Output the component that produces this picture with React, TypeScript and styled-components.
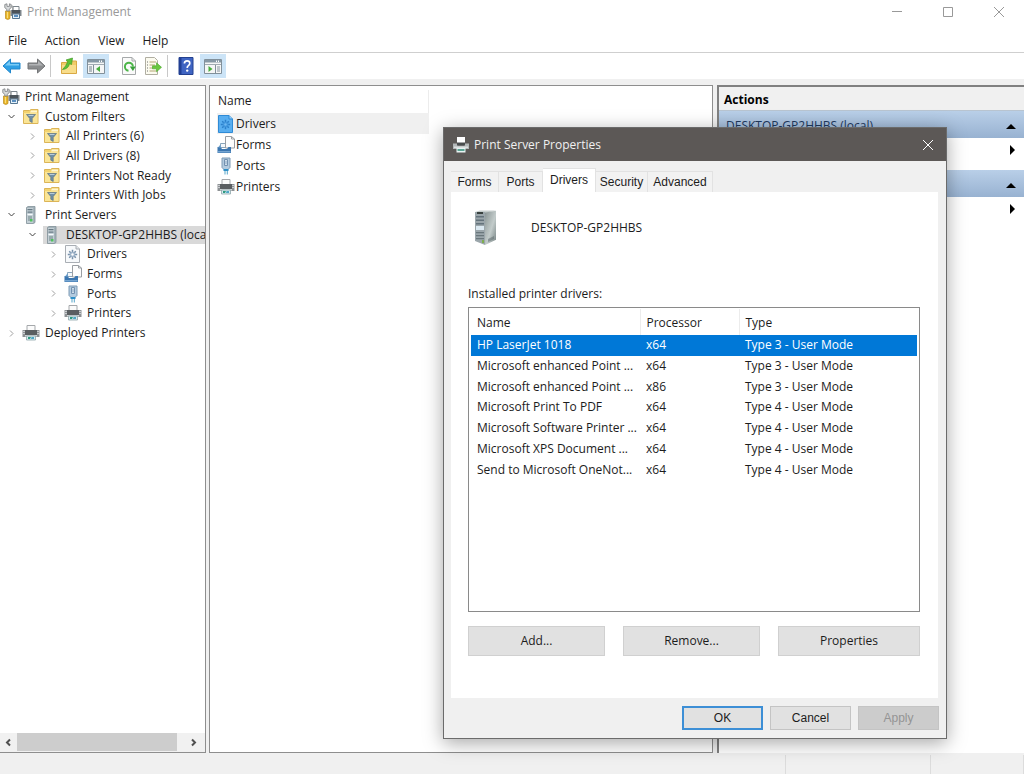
import React from "react";
import styled, { createGlobalStyle, css } from "styled-components";

const Global = createGlobalStyle`
  * { box-sizing: border-box; }
  body { margin: 0; background: #f0f0f0; }
  body, button, table { font: 12px/18px "Open Sans", "Noto Sans", sans-serif; color: #1c1c1c; }
  button { margin: 0; padding: 0; border: 0; background: none; }
  svg { display: block; flex: none; }
`;

/* ---------- icons ---------- */

const PrinterIcon = ({ size = 18 }: { size?: number }) => (
  <svg width={size} height={size} viewBox="0 0 18 18" aria-hidden="true">
    <path d="M5 1.500h8v5H5z" fill="#fbfbfb" stroke="#a5a8ab" />
    <path d="M.5 6h17v7H.5z" fill="#8d9194" />
    <path d="M3 6h12v5H3z" fill="#5a5e61" />
    <path d="M1 7h2v1H1zM1 9h2v1H1zM15 7h2v1h-2zM15 9h2v1h-2z" fill="#c9cccf" />
    <path d="M3 11h12v1.500H3z" fill="#d3d6d8" />
    <path d="M4.500 12h9v4h-9z" fill="#d8eef2" stroke="#8fa4aa" strokeWidth=".8" />
    <path d="M6 13h3l-1 2H6z" fill="#2f9a80" />
    <path d="M9.500 13H12v2H9z" fill="#4fa6c6" />
  </svg>
);

const TitlePrinterIcon = () => (
  <svg width="18" height="18" viewBox="0 0 18 18" aria-hidden="true">
    <path d="M5 1h8v6H5z" fill="#fff" />
    <path d="M1 7.500h4l1 2h6l1-2h4v5.500H1z" fill="#b3b7b8" />
    <path d="M5 6.500h8v3H5z" fill="#4a4d4e" />
    <path d="M2 10.500h14v1.500H2z" fill="#dde0e1" />
    <path d="M4.500 12h9v4.500h-9z" fill="#e8f3f3" />
    <path d="M5.500 13h7v2h-7z" fill="#5aa493" />
  </svg>
);

const ManagementIcon = () => (
  <svg width="18" height="18" viewBox="0 0 18 18" aria-hidden="true">
    <path d="M9 3.500h6v4H9z" fill="#fff" stroke="#7d868d" />
    <path d="M6.500 7h11v6h-11z" fill="#7e868c" />
    <path d="M8 7h8v3.500H8z" fill="#4b5359" />
    <path d="M8.500 11h7v4.500h-7z" fill="#e4f1fa" stroke="#567792" />
    <path d="M10 12h4v2h-4z" fill="#5a8fc0" />
    <path d="M1.500 8h4.500v7.500q-2.200 2-4.500 0z" fill="#eab72b" stroke="#b98a1c" strokeWidth=".7" />
    <path d="M3 9h1v6H3z" fill="#f9dd7c" />
    <path d="M.8 1.500v3.200l2 1.600V8h2.400V6.200l2-1.500V1.500L5.400.8v2.600H3V.8z" fill="#d7dadb" stroke="#7b7e80" strokeWidth=".8" />
    <path d="M7 2q2 0 2.500 2v3H8V4.500L6.500 4z" fill="#a5a8aa" />
  </svg>
);

const FilterFolderIcon = () => (
  <svg width="18" height="18" viewBox="0 0 18 18" aria-hidden="true">
    <path d="M1.500 4.500V2.500h6l1.500-1h7v14h-14.500z" fill="#f3d36f" stroke="#dcb557" />
    <path d="M9 2.500h6v2H8z" fill="#fff6cf" />
    <path d="M2 5h13.500v10H2z" fill="#fae596" />
    <path d="M4.500 6.500h9l-3.300 4v4l-2.400-1.300v-2.700z" fill="#6f8fa6" stroke="#5f7483" strokeWidth=".7" />
    <path d="M6 7h6l-1 1H7z" fill="#b8cbd8" />
  </svg>
);

const ServerIcon = () => (
  <svg width="18" height="18" viewBox="0 0 18 18" aria-hidden="true">
    <path d="M4.500 1.500 6 .5h7v16l-1.500 1h-7z" fill="#a4b3ba" stroke="#83939b" strokeWidth=".8" />
    <path d="M5 2h6v15H5z" fill="#c3cfd5" />
    <path d="M5.500 3h5v1.200h-5zM5.500 5.500h5v1.200h-5z" fill="#687b85" />
    <path d="M5.500 8h5v1h-5z" fill="#f5fafc" />
    <path d="M6 10h4v5H6z" fill="#99aaae" />
    <path d="M8 13h2.500v2.500H8z" fill="#4fc25c" />
  </svg>
);

const TowerIcon = () => (
  <svg width="24" height="36" viewBox="0 0 24 36" aria-hidden="true">
    <defs>
      <linearGradient id="towerSide" x1="0" y1="0" x2="1" y2="1">
        <stop offset="0" stopColor="#8a9595" />
        <stop offset=".55" stopColor="#c3cccb" />
        <stop offset="1" stopColor="#738080" />
      </linearGradient>
    </defs>
    <path d="M1 2 6 .5h16L11 3z" fill="#c6cecd" />
    <path d="M1 2h10v33L1 31z" fill="#9ba6ab" />
    <path d="M11 2.500 22 .8v29L11 35z" fill="url(#towerSide)" />
    <path d="M3 2h6v2H3z" fill="#39413f" />
    <path d="M2 6h8v1.500H2zM2 9.500h8V11H2zM2 13h8v1.500H2z" fill="#64737c" />
    <path d="M2 16h8v4H2z" fill="#dbe9f2" />
    <path d="M2 22h8v1.200H2zM2 25h8v1.200H2zM2 28h8v1.200H2z" fill="#6a777c" />
    <path d="m14 32 6-3v-3l-6 3z" fill="#59666a" opacity=".5" />
    <path d="M8 30h2v3H8z" fill="#7fae4e" />
  </svg>
);

const DriverIcon = ({ active = false }: { active?: boolean }) => (
  <svg width="18" height="18" viewBox="0 0 18 18" aria-hidden="true">
    <path
      d="M1.500.5h10.500l3.500 3.500v13.500h-14z"
      fill={active ? "#58aef0" : "#f7f9fb"}
      stroke={active ? "#2f8bd6" : "#a9aeb4"}
    />
    <path d="M12 .5v3.500h3.500" fill={active ? "#9bd0f8" : "#e3e6e9"} stroke={active ? "#2f8bd6" : "#a9aeb4"} />
    <g stroke={active ? "#2b7fca" : "#7690aa"} strokeWidth="1.500">
      <path d="M8.500 4.800v9.400M3.800 9.500h9.400M5.200 6.200l6.600 6.600M11.800 6.200l-6.600 6.600" />
    </g>
    <circle cx="8.500" cy="9.500" r="2.800" fill={active ? "#3f95dd" : "#9fb4ca"} />
    <circle cx="8.500" cy="9.500" r="1.200" fill={active ? "#6db8f2" : "#fff"} />
  </svg>
);

const FormIcon = () => (
  <svg width="18" height="18" viewBox="0 0 18 18" aria-hidden="true">
    <path d="M3.500 7.500h7v4h-7z" fill="#f4f8fb" stroke="#8aa5bb" />
    <path d="M8.500.5h6L17.500 3v9h-9z" fill="#fdfdfd" stroke="#9a9ea3" />
    <path d="M14.500.5V3h3" fill="none" stroke="#9a9ea3" />
    <path d="M.5 11h3l1.500 2h5l1.500-2h2.500v6H.5z" fill="#3b76b0" />
    <path d="M1 15h12.500v1.500H1z" fill="#76a5d1" />
    <path d="M1 11.500 3 9h1v2.500z" fill="#6f9fca" />
  </svg>
);

const PortIcon = () => (
  <svg width="18" height="18" viewBox="0 0 18 18" aria-hidden="true">
    <path d="M5 1h8v9.500l-2 2H7l-2-2z" fill="#b3cbdf" stroke="#7f9bb5" />
    <path d="M7.500 2.500v6h3v-6z" fill="#eef6fb" stroke="#7391b0" />
    <path d="M8.500 3.500h1v4h-1z" fill="#7295b8" />
    <path d="M6.500 12h5v2h-5z" fill="#2f8fc7" />
    <path d="M7.500 14h1v3.500h-1zM9.800 14h1v3.500h-1z" fill="#57a6ca" />
  </svg>
);

const ArrowIcon = ({ back = false }: { back?: boolean }) => (
  <svg width="20" height="18" viewBox="0 0 20 18" aria-hidden="true">
    {back ? (
      <>
        <path d="M1 9 8.500 2v4H18v6H8.500v4z" fill="#2d9fe4" stroke="#2187cc" strokeLinejoin="round" />
        <path d="M3 8.500 8 4v3h9v1.500z" fill="#79cbf6" />
      </>
    ) : (
      <>
        <path d="M19 9l-7.500-7v4H2v6h9.500v4z" fill="#8b8d8f" stroke="#747678" strokeLinejoin="round" />
        <path d="M17 8.500 12 4v3H3v1.500z" fill="#b2b4b6" />
      </>
    )}
  </svg>
);

const UpFolderIcon = () => (
  <svg width="18" height="18" viewBox="0 0 18 18" aria-hidden="true">
    <path d="M1.500 5.500h5l1-1.500h9v12.500h-15z" fill="#f2cc69" stroke="#d9a944" />
    <path d="M2 8h14v8H2z" fill="#f8dd8b" />
    <path d="M2.500 12.500Q8.500 12 9.500 6.500l2 1L12.500 1 6 3l1.800 1.500Q6 9.500 2.500 12.500z" fill="#5cc237" stroke="#3f9b27" strokeWidth=".7" />
  </svg>
);

const PaneIcon = ({ right = false }: { right?: boolean }) => (
  <svg width="18" height="18" viewBox="0 0 18 18" aria-hidden="true">
    <path d="M.5 2.500h17v14H.5z" fill="#f5f6f6" stroke="#82909a" />
    <path d="M1 3h16v2.500H1z" fill="#8698a5" />
    <path d="M12 3.500h1V5h-1zM14 3.500h1V5h-1z" fill="#fff" />
    <path d="M1 7.500h16" stroke="#a1abb2" />
    {right ? (
      <>
        <path d="M11.500 8v8" stroke="#82909a" />
        <path d="M13 10h3M13 12h3M13 14h3" stroke="#8795a0" />
        <path d="m4.500 9 4 3-4 3z" fill="#48ae3c" />
      </>
    ) : (
      <>
        <path d="M6.500 8v8" stroke="#82909a" />
        <path d="M2 10h3M2 12h3M2 14h3" stroke="#73838e" />
        <path d="m13 9-4 3 4 3z" fill="#48ae3c" />
      </>
    )}
  </svg>
);

const RefreshIcon = () => (
  <svg width="18" height="18" viewBox="0 0 18 18" aria-hidden="true">
    <path d="M2.500.5h9.500l3.500 3.500v13.500h-13z" fill="#fafafa" stroke="#a6a9aa" />
    <path d="M12 .5v3.500h3.500" fill="none" stroke="#a6a9aa" />
    <path d="M8.500 13.700A4 4 0 1 1 12.900 9.500" fill="none" stroke="#4cb548" strokeWidth="2" />
    <path d="M9.800 9.500h6L12.900 14z" fill="#38a13a" />
  </svg>
);

const ExportIcon = () => (
  <svg width="18" height="18" viewBox="0 0 18 18" aria-hidden="true">
    <path d="M1.500.5h9l3 3v14h-12z" fill="#fcfbf0" stroke="#b0aea2" />
    <path d="M3 5h1M3 8h1M3 11h1M3 14h1" stroke="#6f6f6f" />
    <path d="M5.500 5H12M5.500 8H11M5.500 11H9M5.500 14H12" stroke="#b3a574" />
    <path d="M8.500 8.800h4V5.800l5 4.500-5 4.500v-3h-4z" fill="#69c83f" stroke="#47a52a" strokeWidth=".6" />
  </svg>
);

const HelpIcon = () => (
  <svg width="16" height="18" viewBox="0 0 16 18" aria-hidden="true">
    <path d="M1 .5h14v17H1z" fill="#3f64c2" stroke="#23408f" />
    <path d="M1 .5h2.500v17H1z" fill="#213f94" />
    <path d="M6.400 6.600q0-2.700 2.700-2.700t2.700 2.400q0 1.500-1.400 2.300-1.200.8-1.200 2.300" fill="none" stroke="#fff" strokeWidth="1.700" />
    <circle cx="9.200" cy="13.600" r="1.200" fill="#fff" />
  </svg>
);

const chevronPaths = { right: "M3 1.500 6 4.500 3 7.500", down: "M1.500 3l3 3 3-3", left: "M6 1.500 3 4.500 6 7.500" };
const Chevron = ({ dir, color, width = 1 }: { dir: keyof typeof chevronPaths; color: string; width?: number }) => (
  <svg width="9" height="9" viewBox="0 0 9 9" aria-hidden="true">
    <path d={chevronPaths[dir]} fill="none" stroke={color} strokeWidth={width} />
  </svg>
);

const CloseIcon = () => (
  <svg width="12" height="12" viewBox="0 0 12 12" aria-hidden="true">
    <path d="m1 1 10 10M11 1 1 11" stroke="currentColor" />
  </svg>
);

const Triangle = ({ dir }: { dir: "up" | "right" }) => (
  <svg width="12" height="12" viewBox="0 0 12 12" aria-hidden="true">
    <path d={dir === "up" ? "M1 9 6 4l5 5z" : "m4 1 5 5-5 5z"} fill="#000" />
  </svg>
);

/* ---------- main window ---------- */

const Window = styled.div`
  position: relative;
  display: flex;
  flex-direction: column;
  min-height: 100vh;
  overflow: hidden;
`;

const TitleBar = styled.header`
  display: flex;
  align-items: center;
  gap: 5px;
  height: 23px;
  padding-left: 4px;
  background: #fff;
  color: #999;
`;

const WindowTitle = styled.h1`
  flex: 1;
  margin: 0;
  font-size: 12px;
  font-weight: 400;
`;

const WindowControls = styled.div`
  display: flex;
`;

const WindowButton = styled.button`
  display: flex;
  align-items: center;
  justify-content: center;
  width: 51px;
  height: 23px;
  color: #999;
`;

const MenuBar = styled.nav`
  display: flex;
  align-items: center;
  gap: 18px;
  height: 30px;
  padding: 6px 8px 0;
  background: #fff;
  border-bottom: 1px solid #cfcfcf;
`;

const Toolbar = styled.div`
  display: flex;
  align-items: center;
  height: 26px;
  background: #fff;
`;

const ToolGroup = styled.div<{ $gap?: number; $before?: number }>`
  display: flex;
  gap: ${(p) => p.$gap ?? 0}px;
  margin-left: ${(p) => p.$before ?? 0}px;
`;

const ToolSeparator = styled.span`
  width: 1px;
  height: 22px;
  margin: 0 6px 0 2px;
  background: #c8c8c8;
`;

const ToolButton = styled.button<{ $on?: boolean }>`
  display: flex;
  align-items: center;
  justify-content: center;
  width: ${(p) => (p.$on ? 26 : 24)}px;
  height: 24px;
  background: ${(p) => (p.$on ? "#cce4f7" : "transparent")};
`;

const Panes = styled.main`
  flex: 1;
  display: grid;
  grid-template-columns: 206px minmax(0, 1fr) 308px;
  column-gap: 3px;
  padding-top: 6px;
`;

const TreePane = styled.section`
  display: flex;
  flex-direction: column;
  justify-content: space-between;
  min-width: 0;
  background: #fff;
  border: 1px solid #8e8e8e;
  border-left: 0;
`;

const Tree = styled.ul`
  display: grid;
  grid-auto-rows: 1fr;
  height: 256px;
  margin: 1px 0 0;
  padding: 0;
  list-style: none;
`;

const TreeRow = styled.li<{ $level: number }>`
  display: flex;
  align-items: center;
  min-width: 0;
  padding-left: ${(p) => (p.$level === 0 ? 2 : (p.$level - 1) * 21)}px;
`;

const Expander = styled.button`
  display: flex;
  flex: none;
  justify-content: center;
  width: 22px;
`;

const TreeLabel = styled.span<{ $selected?: boolean }>`
  display: flex;
  flex: 1;
  align-items: center;
  gap: 5px;
  min-width: 0;
  overflow: hidden;
  white-space: nowrap;
  background: ${(p) => (p.$selected ? "#d9d9d9" : "transparent")};
`;

const ScrollBar = styled.div`
  display: flex;
  height: 19px;
  padding: 0 3px 1px 0;
  background: #f1f1f1;
`;

const ScrollButton = styled.button`
  display: flex;
  align-items: center;
  justify-content: center;
  width: 17px;
`;

const ScrollTrack = styled.div`
  flex: 1;
`;

const ScrollThumb = styled.div`
  width: 95%;
  height: 100%;
  background: #cdcdcd;
`;

const ListPane = styled.section`
  background: #fff;
  border: 1px solid #8e8e8e;
  padding: 4px 0 0 7px;
`;

const ListHeader = styled.div`
  width: 212px;
  height: 23px;
  padding-left: 1px;
  line-height: 22px;
  border-right: 1px solid #ececec;
`;

const ListItem = styled.button<{ $selected?: boolean }>`
  display: flex;
  align-items: center;
  gap: 1px;
  width: 212px;
  height: 21px;
  background: ${(p) => (p.$selected ? "#f0f0f0" : "transparent")};
`;

const ActionsPane = styled.section`
  margin-left: 1px;
  background: #fff;
  border-top: 2px solid #808080;
  border-left: 2px solid #808080;
`;

const ActionsTitle = styled.h2`
  height: 24px;
  margin: 0;
  padding: 3px 5px 0;
  font-size: 12px;
  line-height: 20px;
  color: #000;
  background: #f0f0f0;
  border-bottom: 1px solid #b8c4d0;
`;

const ActionGroup = styled.button`
  display: flex;
  align-items: center;
  justify-content: space-between;
  width: 100%;
  height: 27px;
  padding: 2px 7px 0;
  color: #1f3a5f;
  background: linear-gradient(#b9cfe8, #98b2d1);
`;

const ActionItem = styled.button`
  display: flex;
  align-items: center;
  justify-content: flex-end;
  width: 100%;
  height: 32px;
  padding: 0 6px 8px;
`;

const StatusBar = styled.footer`
  display: grid;
  grid-template-columns: minmax(0, 1fr) 145px 93px;
  height: 21px;
  padding-top: 2px;
`;

const StatusCell = styled.span`
  border-right: 1px solid #dcdcdc;
`;

/* ---------- dialog ---------- */

const Dialog = styled.div`
  position: absolute;
  top: 127px;
  right: 77px;
  display: flex;
  flex-direction: column;
  width: 504px;
  background: #f0f0f0;
  border: 1px solid #6b6b6b;
  box-shadow: 0 4px 18px rgba(0, 0, 0, 0.35);
`;

const DialogTitle = styled.header`
  display: flex;
  align-items: center;
  gap: 4px;
  height: 33px;
  padding-left: 8px;
  color: #f0f0f0;
  background: #5c5856;
`;

const DialogHeading = styled.h2`
  flex: 1;
  margin: 0;
  font-size: 12px;
  font-weight: 400;
`;

const DialogClose = styled.button`
  display: flex;
  align-items: center;
  justify-content: center;
  width: 36px;
  height: 33px;
  color: #fff;
`;

const classicFont = css`
  font-family: "Liberation Sans", Arial, sans-serif;
  font-size: 12px;
`;

const Tabs = styled.div`
  display: flex;
  align-items: flex-end;
  height: 31px;
  padding: 0 7px;
`;

const Tab = styled.button<{ $active?: boolean; $width: number }>`
  ${classicFont}
  width: ${(p) => p.$width}px;
  height: ${(p) => (p.$active ? 24 : 21)}px;
  padding-bottom: ${(p) => (p.$active ? 2 : 0)}px;
  white-space: nowrap;
  background: ${(p) => (p.$active ? "#fff" : "#f2f2f2")};
  border: 1px solid #e2e2e2;
  border-width: 1px 1px 0 0;
`;

const TabPage = styled.div`
  display: flex;
  flex-direction: column;
  height: 506px;
  margin: 0 8px 0 7px;
  padding: 16px 18px 0 17px;
  background: #fff;
`;

const ServerRow = styled.div`
  display: flex;
  align-items: center;
  gap: 33px;
  height: 40px;
  padding-left: 6px;
`;

const ListLabel = styled.div`
  margin: 37px 0 4px;
`;

const DriverBox = styled.div`
  height: 305px;
  padding: 1px 2px;
  border: 1px solid #8a8a8a;
`;

const DriverTable = styled.table`
  width: 100%;
  height: 171px;
  table-layout: fixed;
  border-collapse: collapse;
`;

const HeadCell = styled.th<{ $width?: number }>`
  width: ${(p) => (p.$width ? `${p.$width}px` : "auto")};
  height: 26px;
  padding: 2px 0 0 6px;
  font-weight: 400;
  text-align: left;
  border-right: ${(p) => (p.$width ? "1px solid #ececec" : "0")};
`;

const DriverRow = styled.tr<{ $selected?: boolean }>`
  color: ${(p) => (p.$selected ? "#fff" : "inherit")};
  background: ${(p) => (p.$selected ? "#0078d7" : "transparent")};
`;

const Cell = styled.td`
  padding: 0 0 0 6px;
  white-space: nowrap;
`;

const ButtonRow = styled.div`
  display: grid;
  grid-template-columns: 137px 137px 142px;
  column-gap: 18px;
  margin-top: 14px;
`;

const ActionButton = styled.button`
  height: 30px;
  background: #e1e1e1;
  border: 1px solid #d0d0d0;
`;

const DialogFooter = styled.div`
  display: flex;
  justify-content: flex-end;
  gap: 7px;
  padding: 8px 7px;
`;

const FooterButton = styled.button<{ $primary?: boolean }>`
  ${classicFont}
  width: 81px;
  height: 24px;
  background: #e1e1e1;
  border: ${(p) => (p.$primary ? "2px solid #3d8fd6" : "1px solid #c4c4c4")};

  &:disabled {
    color: #949494;
    background: #cccccc;
  }
`;

/* ---------- data ---------- */

type Node = { label: string; level: number; icon: React.ReactNode; open?: boolean; selected?: boolean };

const tree: Node[] = [
  { label: "Print Management", level: 0, icon: <ManagementIcon /> },
  { label: "Custom Filters", level: 1, icon: <FilterFolderIcon />, open: true },
  { label: "All Printers (6)", level: 2, icon: <FilterFolderIcon /> },
  { label: "All Drivers (8)", level: 2, icon: <FilterFolderIcon /> },
  { label: "Printers Not Ready", level: 2, icon: <FilterFolderIcon /> },
  { label: "Printers With Jobs", level: 2, icon: <FilterFolderIcon /> },
  { label: "Print Servers", level: 1, icon: <ServerIcon />, open: true },
  { label: "DESKTOP-GP2HHBS (local)", level: 2, icon: <ServerIcon />, open: true, selected: true },
  { label: "Drivers", level: 3, icon: <DriverIcon /> },
  { label: "Forms", level: 3, icon: <FormIcon /> },
  { label: "Ports", level: 3, icon: <PortIcon /> },
  { label: "Printers", level: 3, icon: <PrinterIcon /> },
  { label: "Deployed Printers", level: 1, icon: <PrinterIcon /> },
];

const listItems = [
  { label: "Drivers", icon: <DriverIcon active />, selected: true },
  { label: "Forms", icon: <FormIcon /> },
  { label: "Ports", icon: <PortIcon /> },
  { label: "Printers", icon: <PrinterIcon /> },
];

const tabs = [
  { label: "Forms", width: 48 },
  { label: "Ports", width: 44 },
  { label: "Drivers", width: 53, active: true },
  { label: "Security", width: 52 },
  { label: "Advanced", width: 65 },
];

const drivers = [
  ["HP LaserJet 1018", "x64", "Type 3 - User Mode"],
  ["Microsoft enhanced Point ...", "x64", "Type 3 - User Mode"],
  ["Microsoft enhanced Point ...", "x86", "Type 3 - User Mode"],
  ["Microsoft Print To PDF", "x64", "Type 4 - User Mode"],
  ["Microsoft Software Printer ...", "x64", "Type 4 - User Mode"],
  ["Microsoft XPS Document ...", "x64", "Type 4 - User Mode"],
  ["Send to Microsoft OneNot...", "x64", "Type 4 - User Mode"],
];

export default function App() {
  return (
    <Window>
      <Global />
      <TitleBar>
        <ManagementIcon />
        <WindowTitle>Print Management</WindowTitle>
        <WindowControls>
          <WindowButton aria-label="Minimize">
            <svg width="12" height="12" viewBox="0 0 12 12"><path d="M1 5.500h10" stroke="currentColor" /></svg>
          </WindowButton>
          <WindowButton aria-label="Maximize">
            <svg width="12" height="12" viewBox="0 0 12 12"><path d="M1.500 1.500h9v9h-9z" fill="none" stroke="currentColor" /></svg>
          </WindowButton>
          <WindowButton aria-label="Close"><CloseIcon /></WindowButton>
        </WindowControls>
      </TitleBar>

      <MenuBar>
        {["File", "Action", "View", "Help"].map((m) => (
          <button key={m}>{m}</button>
        ))}
      </MenuBar>

      <Toolbar>
        <ToolGroup>
          <ToolButton aria-label="Back"><ArrowIcon back /></ToolButton>
          <ToolButton aria-label="Forward"><ArrowIcon /></ToolButton>
        </ToolGroup>
        <ToolSeparator />
        <ToolGroup $gap={2}>
          <ToolButton aria-label="Up one level"><UpFolderIcon /></ToolButton>
          <ToolButton $on aria-label="Show or hide console tree"><PaneIcon /></ToolButton>
        </ToolGroup>
        <ToolGroup $before={8}>
          <ToolButton aria-label="Refresh"><RefreshIcon /></ToolButton>
          <ToolButton aria-label="Export list"><ExportIcon /></ToolButton>
        </ToolGroup>
        <ToolSeparator />
        <ToolGroup $gap={2}>
          <ToolButton aria-label="Help topics"><HelpIcon /></ToolButton>
          <ToolButton $on aria-label="Show or hide action pane"><PaneIcon right /></ToolButton>
        </ToolGroup>
      </Toolbar>

      <Panes>
        <TreePane>
          <Tree>
            {tree.map((n) => (
              <TreeRow key={`${n.level}-${n.label}`} $level={n.level}>
                {n.level > 0 && (
                  <Expander aria-label={n.open ? `Collapse ${n.label}` : `Expand ${n.label}`}>
                    <Chevron dir={n.open ? "down" : "right"} color={n.open ? "#444" : "#a0a0a0"} />
                  </Expander>
                )}
                <TreeLabel $selected={n.selected}>
                  {n.icon}
                  {n.label}
                </TreeLabel>
              </TreeRow>
            ))}
          </Tree>
          <ScrollBar>
            <ScrollButton aria-label="Scroll left"><Chevron dir="left" color="#505050" width={2} /></ScrollButton>
            <ScrollTrack><ScrollThumb /></ScrollTrack>
            <ScrollButton aria-label="Scroll right"><Chevron dir="right" color="#505050" width={2} /></ScrollButton>
          </ScrollBar>
        </TreePane>

        <ListPane>
          <ListHeader>Name</ListHeader>
          {listItems.map((i) => (
            <ListItem key={i.label} $selected={i.selected}>
              {i.icon}
              {i.label}
            </ListItem>
          ))}
        </ListPane>

        <ActionsPane>
          <ActionsTitle>Actions</ActionsTitle>
          <ActionGroup>
            DESKTOP-GP2HHBS (local)
            <Triangle dir="up" />
          </ActionGroup>
          <ActionItem aria-label="More actions for the server"><Triangle dir="right" /></ActionItem>
          <ActionGroup aria-label="Drivers">
            <span />
            <Triangle dir="up" />
          </ActionGroup>
          <ActionItem aria-label="More actions for drivers"><Triangle dir="right" /></ActionItem>
        </ActionsPane>
      </Panes>

      <StatusBar>
        <StatusCell />
        <StatusCell />
        <StatusCell />
      </StatusBar>

      <Dialog role="dialog" aria-labelledby="dialog-title">
        <DialogTitle>
          <TitlePrinterIcon />
          <DialogHeading id="dialog-title">Print Server Properties</DialogHeading>
          <DialogClose aria-label="Close dialog"><CloseIcon /></DialogClose>
        </DialogTitle>
        <Tabs role="tablist">
          {tabs.map((t) => (
            <Tab key={t.label} role="tab" aria-selected={!!t.active} $active={t.active} $width={t.width}>
              {t.label}
            </Tab>
          ))}
        </Tabs>
        <TabPage role="tabpanel">
          <ServerRow>
            <TowerIcon />
            DESKTOP-GP2HHBS
          </ServerRow>
          <ListLabel id="drivers-label">Installed printer drivers:</ListLabel>
          <DriverBox>
            <DriverTable aria-labelledby="drivers-label">
              <thead>
                <tr>
                  <HeadCell $width={169}>Name</HeadCell>
                  <HeadCell $width={99}>Processor</HeadCell>
                  <HeadCell>Type</HeadCell>
                </tr>
              </thead>
              <tbody>
                {drivers.map((d, i) => (
                  <DriverRow key={i} $selected={i === 0}>
                    {d.map((text, c) => (
                      <Cell key={c}>{text}</Cell>
                    ))}
                  </DriverRow>
                ))}
              </tbody>
            </DriverTable>
          </DriverBox>
          <ButtonRow>
            <ActionButton>Add...</ActionButton>
            <ActionButton>Remove...</ActionButton>
            <ActionButton>Properties</ActionButton>
          </ButtonRow>
        </TabPage>
        <DialogFooter>
          <FooterButton $primary>OK</FooterButton>
          <FooterButton>Cancel</FooterButton>
          <FooterButton disabled>Apply</FooterButton>
        </DialogFooter>
      </Dialog>
    </Window>
  );
}
